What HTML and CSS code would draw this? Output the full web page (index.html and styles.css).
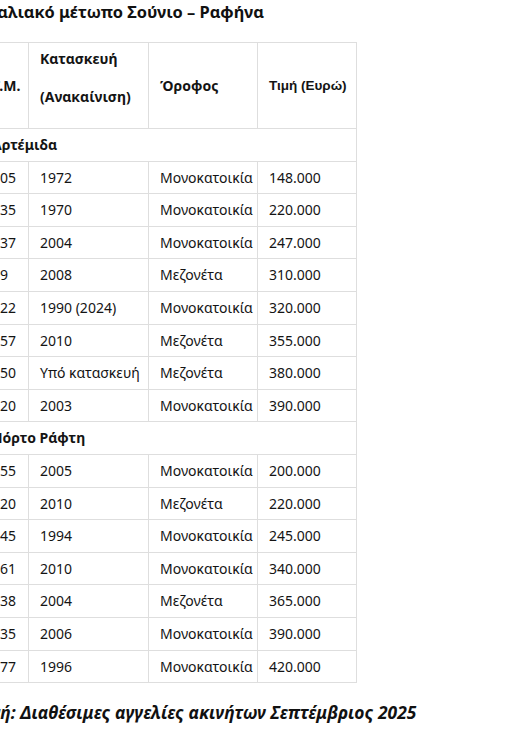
FILE: index.html
```html
<!DOCTYPE html>
<html lang="el">
<head>
<meta charset="utf-8">
<title>Παραλιακό μέτωπο Σούνιο – Ραφήνα</title>
<link rel="stylesheet" href="styles.css">
</head>
<body>
<div class="page">
  <h3 class="title">Παραλιακό μέτωπο Σούνιο – Ραφήνα</h3>
  <table class="listings">
    <colgroup>
      <col class="c-size">
      <col class="c-year">
      <col class="c-type">
      <col class="c-price">
    </colgroup>
    <thead>
      <tr>
        <th>Τ.Μ.</th>
        <th><span class="hl">Κατασκευή</span><span class="hl hl-last">(Ανακαίνιση)</span></th>
        <th>Όροφος</th>
        <th class="alt">Τιμή (Ευρώ)</th>
      </tr>
    </thead>
    <tbody>
      <tr class="group"><td colspan="4">Αρτέμιδα</td></tr>
      <tr><td>105</td><td>1972</td><td>Μονοκατοικία</td><td>148.000</td></tr>
      <tr><td>135</td><td>1970</td><td>Μονοκατοικία</td><td>220.000</td></tr>
      <tr><td>137</td><td>2004</td><td>Μονοκατοικία</td><td>247.000</td></tr>
      <tr><td>99</td><td>2008</td><td>Μεζονέτα</td><td>310.000</td></tr>
      <tr><td>122</td><td>1990 (2024)</td><td>Μονοκατοικία</td><td>320.000</td></tr>
      <tr><td>157</td><td>2010</td><td>Μεζονέτα</td><td>355.000</td></tr>
      <tr><td>150</td><td>Υπό κατασκευή</td><td>Μεζονέτα</td><td>380.000</td></tr>
      <tr><td>120</td><td>2003</td><td>Μονοκατοικία</td><td>390.000</td></tr>
      <tr class="group"><td colspan="4">Πόρτο Ράφτη</td></tr>
      <tr><td>155</td><td>2005</td><td>Μονοκατοικία</td><td>200.000</td></tr>
      <tr><td>120</td><td>2010</td><td>Μεζονέτα</td><td>220.000</td></tr>
      <tr><td>145</td><td>1994</td><td>Μονοκατοικία</td><td>245.000</td></tr>
      <tr><td>161</td><td>2010</td><td>Μονοκατοικία</td><td>340.000</td></tr>
      <tr><td>138</td><td>2004</td><td>Μεζονέτα</td><td>365.000</td></tr>
      <tr><td>135</td><td>2006</td><td>Μονοκατοικία</td><td>390.000</td></tr>
      <tr><td>177</td><td>1996</td><td>Μονοκατοικία</td><td>420.000</td></tr>
    </tbody>
  </table>
  <p class="source"><em>Πηγή: Διαθέσιμες αγγελίες ακινήτων Σεπτέμβριος 2025</em></p>
</div>
</body>
</html>
```

FILE: styles.css
```css
html, body {
  margin: 0;
  padding: 0;
  background: #ffffff;
}

body {
  overflow: hidden;
  font-family: "Noto Sans", "DejaVu Sans", sans-serif;
  color: #141414;
}

.page {
  margin-left: -20px;
}

.title {
  margin: 0 0 19px -16px;
  font-size: 16.4px;
  line-height: 23px;
  font-weight: 700;
  color: #111;
}

.listings {
  border-collapse: collapse;
  font-size: 14px;
  table-layout: fixed;
  width: 376px;
}

.c-size { width: 48px; }
.c-year { width: 120px; }
.c-type { width: 109px; }
.c-price { width: 99px; }

.listings th,
.listings td {
  border: 1px solid #dedede;
  padding: 5px 11px;
  line-height: 21.6px;
  text-align: left;
  vertical-align: middle;
  white-space: nowrap;
}

.listings th {
  font-weight: 700;
}

.hl {
  display: block;
  line-height: 22px;
  margin-bottom: 16px;
}

.hl-last {
  margin-bottom: 15px;
}

.listings th.alt {
  font-family: "Liberation Sans", Arial, sans-serif;
  font-size: 13.5px;
}

.group td {
  font-weight: 700;
}

.source {
  margin: 17px 0 0 -11px;
  font-size: 17.4px;
  line-height: 24px;
  font-weight: 700;
  color: #111;
}
```
